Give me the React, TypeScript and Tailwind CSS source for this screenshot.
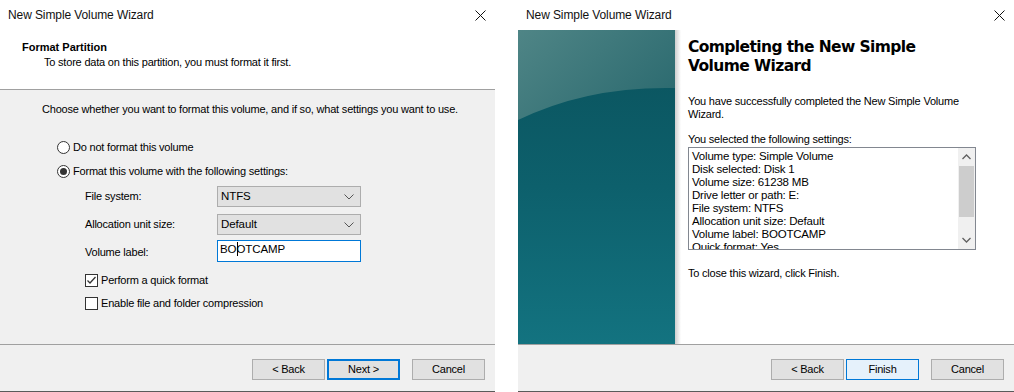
import React from "react";

const sans = { fontFamily: '"Liberation Sans", Arial, sans-serif' };

function CloseX() {
  return (
    <svg width="11" height="11" viewBox="0 0 11 11">
      <path d="M0.5 0.5 L10.5 10.5 M10.5 0.5 L0.5 10.5" stroke="#111" strokeWidth="1" fill="none" />
    </svg>
  );
}

function TitleBar() {
  return (
    <div className="h-[30px] flex items-center justify-between pl-[8px] pr-[9px] bg-white">
      <span className="text-[12px] text-[#111] tracking-[-0.1px]" style={sans}>
        New Simple Volume Wizard
      </span>
      <CloseX />
    </div>
  );
}

function Btn({ children, kind }: { children: React.ReactNode; kind?: "default" | "focus" | "hover" }) {
  const cls =
    kind === "focus"
      ? "border-2 border-[#0078d7] bg-[#e1e1e1]"
      : kind === "hover"
      ? "border border-[#0078d7] bg-[#e5f1fb]"
      : "border border-[#adadad] bg-[#e1e1e1]";
  return (
    <div className={`w-[73px] h-[21px] box-border flex items-center justify-center text-[11px] tracking-[-0.2px] text-black ${cls}`}>
      {children}
    </div>
  );
}

function Footer({ mid }: { mid: React.ReactNode }) {
  return (
    <div className="h-[47px] bg-[#f0f0f0] border-b border-[#5a5a5a] box-border flex justify-end items-start pt-[14px] pr-[10px]">
      <Btn>&lt; Back</Btn>
      <div className="ml-[2px]">{mid}</div>
      <div className="ml-[12px]">
        <Btn>Cancel</Btn>
      </div>
    </div>
  );
}

function Radio({ checked }: { checked?: boolean }) {
  return (
    <div className="w-[13px] h-[13px] rounded-full border border-[#333] bg-white box-border flex items-center justify-center">
      {checked && <div className="w-[7px] h-[7px] rounded-full bg-[#333]" />}
    </div>
  );
}

function Check({ checked }: { checked?: boolean }) {
  return (
    <div className="w-[13px] h-[13px] border border-[#333] bg-white box-border flex items-center justify-center">
      {checked && (
        <svg width="11" height="11" viewBox="0 0 11 11">
          <path d="M1.5 5.5 L4 8 L9.5 2" stroke="#333" strokeWidth="1.3" fill="none" />
        </svg>
      )}
    </div>
  );
}

function Chevron() {
  return (
    <svg width="10" height="6" viewBox="0 0 10 6">
      <path d="M0.5 0.5 L5 5 L9.5 0.5" stroke="#555" strokeWidth="1" fill="none" />
    </svg>
  );
}

function Combo({ value }: { value: string }) {
  return (
    <div className="w-[144px] h-[21px] box-border border border-[#adadad] bg-[#e1e1e1] flex items-center justify-between pl-[3px] pr-[6px] text-[11.5px] tracking-[-0.1px] text-black">
      <span>{value}</span>
      <Chevron />
    </div>
  );
}

function LeftDialog() {
  return (
    <div className="w-[495px] h-[392px] flex flex-col bg-white" style={sans}>
      <TitleBar />
      <div className="h-[60px] box-border border-b border-[#a0a0a0] bg-white pt-[10px] tracking-[-0.2px]">
        <div className="pl-[22px] text-[11px] leading-[14px] font-bold text-black tracking-[0px]">Format Partition</div>
        <div className="pl-[44px] mt-[1px] text-[11px] leading-[14px] text-black">
          To store data on this partition, you must format it first.
        </div>
      </div>
      <div className="h-[255px] box-border border-b border-[#a0a0a0] bg-[#f0f0f0] pt-[12px] text-[11px] tracking-[-0.2px] text-black">
        <div className="pl-[42px] leading-[14px]">
          Choose whether you want to format this volume, and if so, what settings you want to use.
        </div>
        <div className="pl-[57px] mt-[23px] h-[16px] flex items-center gap-[3px]">
          <Radio />
          <span>Do not format this volume</span>
        </div>
        <div className="pl-[57px] mt-[8px] h-[16px] flex items-center gap-[3px]">
          <Radio checked />
          <span>Format this volume with the following settings:</span>
        </div>
        <div className="pl-[85px] mt-[7px] flex flex-col">
          <div className="flex items-center h-[21px]">
            <span className="w-[132px]">File system:</span>
            <Combo value="NTFS" />
          </div>
          <div className="flex items-center h-[21px] mt-[7px]">
            <span className="w-[132px]">Allocation unit size:</span>
            <Combo value="Default" />
          </div>
          <div className="flex items-center h-[22px] mt-[5px]">
            <span className="w-[132px] pt-[2px]">Volume label:</span>
            <div className="w-[144px] h-[22px] box-border border border-[#0078d7] bg-white flex items-center pl-[2px] pb-[3px] text-[11.5px] tracking-[-0.1px]">
              <span>BO</span>
              <span className="relative">
                O
                <span className="absolute left-[1px] top-[1px] w-px h-[14px] bg-black" />
              </span>
              <span>TCAMP</span>
            </div>
          </div>
          <div className="flex items-center h-[16px] mt-[10px] gap-[3px]">
            <Check checked />
            <span>Perform a quick format</span>
          </div>
          <div className="flex items-center h-[16px] mt-[7px] gap-[3px]">
            <Check />
            <span>Enable file and folder compression</span>
          </div>
        </div>
      </div>
      <Footer mid={<Btn kind="focus">Next &gt;</Btn>} />
    </div>
  );
}

function TealArt() {
  return (
    <svg width="157" height="314" viewBox="0 0 157 314" className="block">
      <defs>
        <linearGradient id="up" x1="0" y1="0" x2="1" y2="0.6">
          <stop offset="0" stopColor="#4f8586" />
          <stop offset="1" stopColor="#2e6c71" />
        </linearGradient>
        <linearGradient id="low" x1="0" y1="0" x2="0" y2="1">
          <stop offset="0" stopColor="#0a525c" />
          <stop offset="0.5" stopColor="#0d606c" />
          <stop offset="1" stopColor="#137380" />
        </linearGradient>
      </defs>
      <rect x="0" y="0" width="157" height="314" fill="url(#low)" />
      <path d="M0 0 L157 0 L157 58 Q70 56 0 90 Z" fill="url(#up)" />
    </svg>
  );
}

const settings = [
  "Volume type: Simple Volume",
  "Disk selected: Disk 1",
  "Volume size: 61238 MB",
  "Drive letter or path: E:",
  "File system: NTFS",
  "Allocation unit size: Default",
  "Volume label: BOOTCAMP",
  "Quick format: Yes",
];

function RightDialog() {
  return (
    <div className="w-[496px] h-[392px] flex flex-col bg-white" style={sans}>
      <TitleBar />
      <div className="h-[315px] box-border border-b border-[#a0a0a0] flex bg-white">
        <TealArt />
        <div className="w-[6px] h-full bg-gradient-to-r from-[#cfcfcf] to-white" />
        <div className="pl-[7px] pt-[8px] text-[11px] tracking-[-0.2px] text-black">
          <div
            className="text-[15.5px] leading-[19px] font-bold tracking-[-0.6px]"
            style={{ fontFamily: '"DejaVu Sans", Verdana, sans-serif' }}
          >
            Completing the New Simple
            <br />
            Volume Wizard
          </div>
          <div className="mt-[19px] leading-[13px] w-[290px]">
            You have successfully completed the New Simple Volume Wizard.
          </div>
          <div className="mt-[12px] leading-[13px]">You selected the following settings:</div>
          <div className="mt-[1px] w-[288px] h-[103px] box-border border border-[#828790] bg-white flex overflow-hidden">
            <div className="flex-1 pl-[3px] pt-[2px] overflow-hidden">
              {settings.map((s) => (
                <div key={s} className="leading-[13px] text-[11.5px] tracking-[-0.2px] whitespace-nowrap">
                  {s}
                </div>
              ))}
            </div>
            <div className="w-[17px] h-full bg-[#f0f0f0] flex flex-col items-center">
              <div className="h-[18px] flex items-center justify-center">
                <svg width="9" height="6" viewBox="0 0 9 6">
                  <path d="M0.5 5 L4.5 1 L8.5 5" stroke="#606060" strokeWidth="1.3" fill="none" />
                </svg>
              </div>
              <div className="w-[15px] h-[51px] bg-[#cdcdcd]" />
              <div className="flex-1" />
              <div className="h-[18px] flex items-center justify-center">
                <svg width="9" height="6" viewBox="0 0 9 6">
                  <path d="M0.5 1 L4.5 5 L8.5 1" stroke="#606060" strokeWidth="1.3" fill="none" />
                </svg>
              </div>
            </div>
          </div>
          <div className="mt-[17px] leading-[13px]">To close this wizard, click Finish.</div>
        </div>
      </div>
      <Footer mid={<Btn kind="hover">Finish</Btn>} />
    </div>
  );
}

export default function App() {
  return (
    <div className="w-[1014px] h-[392px] bg-white flex overflow-hidden">
      <LeftDialog />
      <div className="w-[23px]" />
      <RightDialog />
    </div>
  );
}
